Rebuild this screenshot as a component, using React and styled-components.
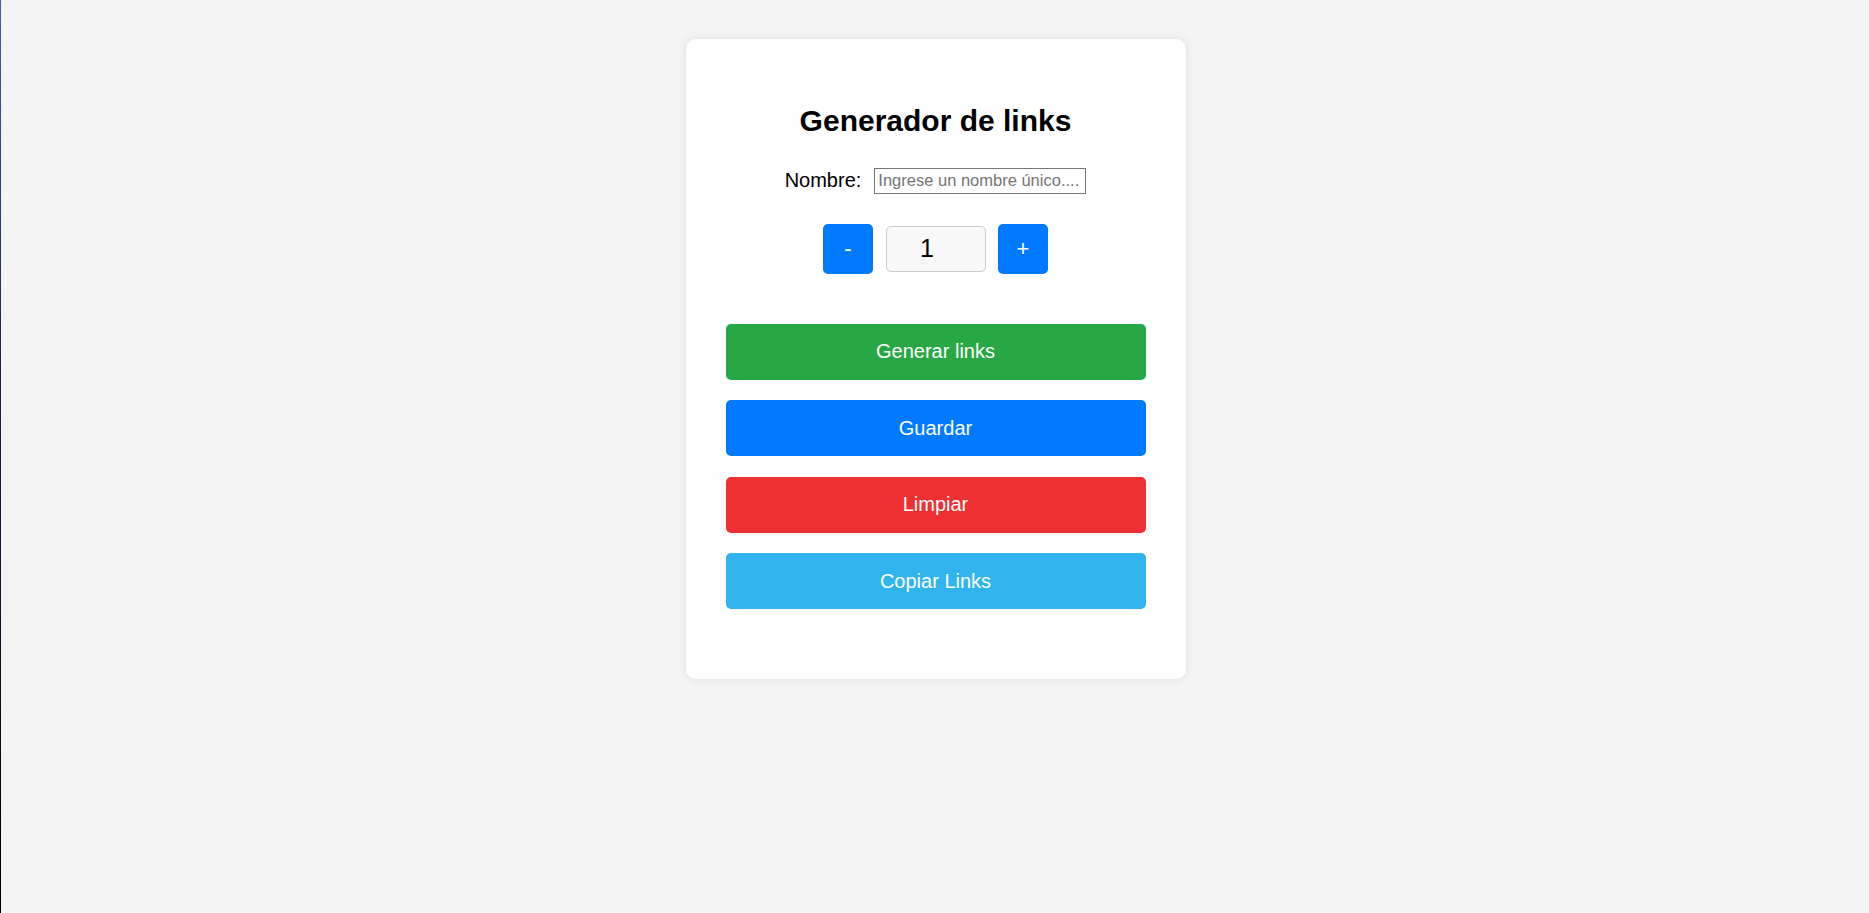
import React, { useState } from "react";
import styled, { createGlobalStyle } from "styled-components";

const GlobalStyle = createGlobalStyle`
  html, body {
    margin: 0;
    padding: 0;
  }
  body {
    background-color: #f4f4f4;
    background-image: linear-gradient(to bottom, #3f5fb8 0%, #1a2450 40%, #000000 100%);
    background-size: 1px 100%;
    background-repeat: no-repeat;
    min-height: 913px;
    font-family: "Liberation Sans", Arial, sans-serif;
  }
`;

const Page = styled.div`
  display: flex;
  justify-content: center;
  padding-top: 39px;
  padding-left: 2px;
`;

const Card = styled.div`
  box-sizing: border-box;
  width: 500px;
  background: #ffffff;
  border-radius: 10px;
  box-shadow: 0 0 10px rgba(0, 0, 0, 0.1);
  padding: 40px 40px 70px;
  display: flex;
  flex-direction: column;
  align-items: center;
`;

const Title = styled.h1`
  margin: 25px 0 0;
  font-size: 30px;
  font-weight: 700;
  color: #000;
  line-height: 34.5px;
`;

const NameRow = styled.div`
  margin-top: 29px;
  display: flex;
  align-items: center;
  gap: 13px;
`;

const Label = styled.label`
  font-size: 20px;
  color: #000;
`;

const TextInput = styled.input`
  box-sizing: border-box;
  width: 212px;
  height: 26px;
  border: 1px solid #767676;
  border-radius: 0;
  padding: 1px 3px;
  font-family: "Liberation Sans", Arial, sans-serif;
  font-size: 16.5px;
  color: #000;
  outline: none;
  &::placeholder {
    color: #757575;
  }
`;

const CounterRow = styled.div`
  margin-top: 30px;
  display: flex;
  align-items: center;
  gap: 12.5px;
`;

const StepButton = styled.button`
  width: 50px;
  height: 50px;
  border: none;
  border-radius: 5px;
  background: #007bff;
  color: #fff;
  font-family: "Liberation Sans", Arial, sans-serif;
  font-size: 22px;
  padding: 0;
  cursor: pointer;
`;

const NumberBox = styled.input`
  box-sizing: border-box;
  width: 100px;
  height: 46px;
  border: 1px solid #cccccc;
  border-radius: 5px;
  background: #f8f8f8;
  text-align: center;
  padding: 0 17px 0 0;
  font-family: "Liberation Sans", Arial, sans-serif;
  font-size: 25px;
  color: #000;
  outline: none;
`;

const Actions = styled.div`
  margin-top: 50px;
  width: 100%;
  display: flex;
  flex-direction: column;
  gap: 20.5px;
`;

const ActionButton = styled.button`
  width: 100%;
  height: 56px;
  border: none;
  border-radius: 5px;
  background: ${(p) => p.$bg};
  color: #fff;
  font-family: "Liberation Sans", Arial, sans-serif;
  font-size: 20px;
  cursor: pointer;
`;

export default function App() {
  const [count, setCount] = useState(1);
  return (
    <>
      <GlobalStyle />
      <Page>
        <Card>
          <Title>Generador de links</Title>
          <NameRow>
            <Label htmlFor="nombre">Nombre:</Label>
            <TextInput id="nombre" type="text" placeholder="Ingrese un nombre único...." />
          </NameRow>
          <CounterRow>
            <StepButton onClick={() => setCount((c) => Math.max(1, c - 1))}>-</StepButton>
            <NumberBox type="text" value={count} readOnly />
            <StepButton onClick={() => setCount((c) => c + 1)}>+</StepButton>
          </CounterRow>
          <Actions>
            <ActionButton $bg="#28a745">Generar links</ActionButton>
            <ActionButton $bg="#007bff">Guardar</ActionButton>
            <ActionButton $bg="#ee3032">Limpiar</ActionButton>
            <ActionButton $bg="#31b4ee">Copiar Links</ActionButton>
          </Actions>
        </Card>
      </Page>
    </>
  );
}
